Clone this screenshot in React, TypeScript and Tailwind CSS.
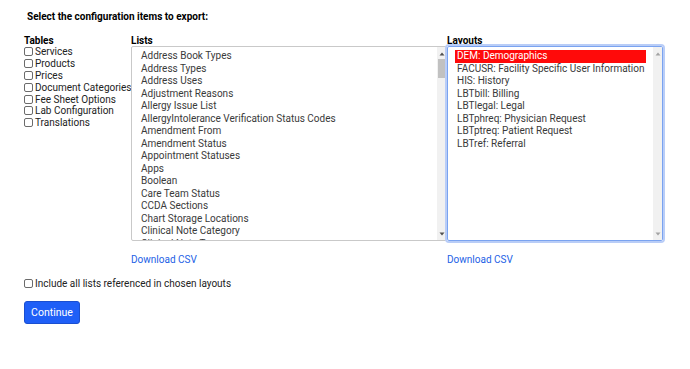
import React from "react";

const lists = [
  "Address Book Types",
  "Address Types",
  "Address Uses",
  "Adjustment Reasons",
  "Allergy Issue List",
  "AllergyIntolerance Verification Status Codes",
  "Amendment From",
  "Amendment Status",
  "Appointment Statuses",
  "Apps",
  "Boolean",
  "Care Team Status",
  "CCDA Sections",
  "Chart Storage Locations",
  "Clinical Note Category",
  "Clinical Note Type",
];

const layouts = [
  "DEM: Demographics",
  "FACUSR: Facility Specific User Information",
  "HIS: History",
  "LBTbill: Billing",
  "LBTlegal: Legal",
  "LBTphreq: Physician Request",
  "LBTptreq: Patient Request",
  "LBTref: Referral",
];

const tables = [
  "Services",
  "Products",
  "Prices",
  "Document Categories",
  "Fee Sheet Options",
  "Lab Configuration",
  "Translations",
];

function Box() {
  return (
    <span className="inline-block w-[9px] h-[9px] border border-[#6b6b6b] rounded-[2px] bg-white shrink-0" />
  );
}

function Scrollbar({ thumb, disabled }: { thumb?: boolean; disabled?: boolean }) {
  const arrow = disabled ? "#a3a3a3" : "#505050";
  return (
    <div className="w-[9px] bg-[#f1f1f1] flex flex-col items-center justify-between py-[3px] shrink-0">
      <div className="flex flex-col items-center w-full">
        <svg width="6" height="4" viewBox="0 0 6 4" className="mt-[2px]">
          <polygon points="3,0.5 5.5,3.5 0.5,3.5" fill={arrow} />
        </svg>
        {thumb && <div className="w-[8px] h-[19px] bg-[#c1c1c1] mt-[3px]" />}
      </div>
      <svg width="6" height="4" viewBox="0 0 6 4" className="mb-[1px]">
        <polygon points="0.5,0.5 5.5,0.5 3,3.5" fill={arrow} />
      </svg>
    </div>
  );
}

export default function App() {
  return (
    <div
      className="w-[690px] h-[369px] bg-white text-[#1c1c1c] pl-[24px] pt-[10px]"
      style={{ fontFamily: "Roboto, 'Liberation Sans', sans-serif" }}
    >
      <div className="pl-[3px] font-bold text-[10px] leading-[14px] text-black">
        Select the configuration items to export:
      </div>
      <div className="flex mt-[11px]">
        <div className="w-[107px]">
          <div className="font-bold text-[10px] leading-[11px] text-black">Tables</div>
          <div className="flex flex-col">
            {tables.map((t) => (
              <div key={t} className="flex items-center gap-[2px] h-[11.8px] text-[10px] whitespace-nowrap text-[#222]">
                <Box />
                <span>{t}</span>
              </div>
            ))}
          </div>
        </div>
        <div className="w-[316px] flex flex-col">
          <div className="font-bold text-[10px] leading-[11px] text-black">Lists</div>
          <div className="h-[195px] border border-[#c9c9c9] rounded-[2px] flex overflow-hidden">
            <div className="flex-1 overflow-hidden pt-[3px] pl-[7px]">
              {lists.map((l) => (
                <div key={l} className="px-[2px] h-[12.5px] leading-[12.5px] text-[10px] text-[#3a3a3a] whitespace-nowrap">
                  {l}
                </div>
              ))}
            </div>
            <Scrollbar thumb />
          </div>
          <a className="mt-[12px] text-[10px] text-[#1d5fe6] leading-[14px]">Download CSV</a>
        </div>
        <div className="w-[216px] flex flex-col">
          <div className="font-bold text-[10px] leading-[11px] text-black">Layouts</div>
          <div className="h-[195px] border border-[#7aa3f0] rounded-[2px] outline-2 outline-[#b9cdf7] flex overflow-hidden">
            <div className="flex-1 overflow-hidden pt-[3px] pl-[7px] pr-[7px]">
              {layouts.map((l, i) => (
                <div
                  key={l}
                  className={
                    "px-[2px] h-[12.5px] leading-[12.5px] text-[10px] whitespace-nowrap " +
                    (i === 0 ? "bg-[#ff0a0a] text-white" : "text-[#3a3a3a]")
                  }
                >
                  {l}
                </div>
              ))}
            </div>
            <Scrollbar disabled />
          </div>
          <a className="mt-[12px] text-[10px] text-[#1d5fe6] leading-[14px]">Download CSV</a>
        </div>
      </div>
      <div className="flex items-center gap-[2px] mt-[9px] text-[10px] text-[#222]">
        <Box />
        <span>Include all lists referenced in chosen layouts</span>
      </div>
      <button className="mt-[10px] h-[23px] w-[56px] bg-[#1f5ff7] border border-[#1a4fd0] rounded-[3px] text-white text-[10.5px]">
        Continue
      </button>
    </div>
  );
}
